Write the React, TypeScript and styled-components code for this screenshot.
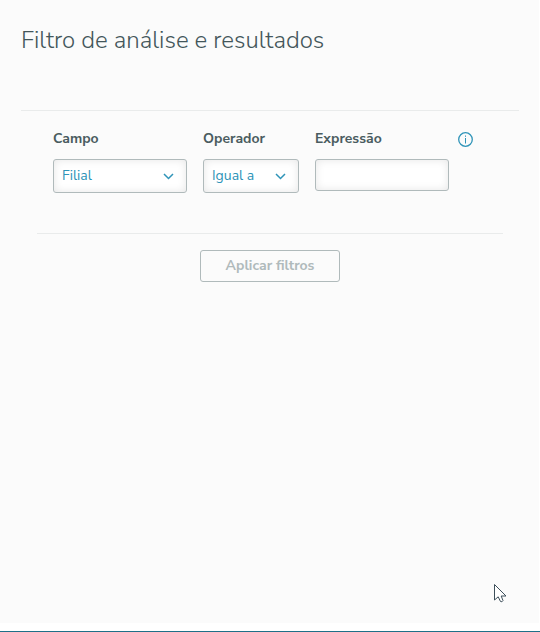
import React from 'react';
import styled, { createGlobalStyle } from 'styled-components';

const GlobalStyle = createGlobalStyle`
  *, *::before, *::after { box-sizing: border-box; }
  body {
    margin: 0;
    background: #ffffff;
    color: #4a5c60;
    font-family: "Nunito Sans", Nunito, "Open Sans", "Noto Sans", sans-serif;
    font-size: 14px;
    line-height: 20px;
  }
  button, input, select { font: inherit; margin: 0; }
`;

const Page = styled.div`
  display: flex;
  flex-direction: column;
  min-height: 100vh;
  padding: 0 1px 8px 0;
  border-bottom: 1px solid #1f6f88;
`;

const Panel = styled.main`
  flex: 1;
  padding: 24px 20px 24px 21px;
  background: #fbfbfb;
`;

const Title = styled.h1`
  margin: 0;
  padding-bottom: 54px;
  color: #43565a;
  font-size: 24px;
  font-weight: 300;
  line-height: 32px;
`;

const Form = styled.form`
  padding: 0 16px;
`;

const Divider = styled.hr`
  height: 1px;
  margin: 0;
  border: 0;
  background: #e9ebeb;
`;

const FilterRow = styled.div`
  display: flex;
  align-items: flex-start;
  gap: 8px;
  padding: 18px 28px 40px 16px;
`;

const Fields = styled.div`
  flex: 1;
  display: grid;
  grid-template-columns: 134fr 96fr 134fr;
  align-items: start;
  gap: 16px;
`;

const Field = styled.div`
  display: flex;
  flex-direction: column;
  gap: 10px;
  min-width: 0;
`;

const Label = styled.label`
  font-weight: 700;
  font-size: 14px;
  line-height: 20px;
`;

const SelectBox = styled.div`
  position: relative;
`;

const Select = styled.select`
  appearance: none;
  display: block;
  width: 100%;
  height: 34px;
  padding: 0 32px 0 8px;
  border: 1px solid #b0babb;
  border-radius: 3px;
  background: #ffffff;
  box-shadow: inset 0 0 8px rgba(0, 0, 0, 0.1);
  color: #2f94b8;
`;

const Chevron = styled.svg`
  position: absolute;
  top: 11px;
  right: 12px;
  pointer-events: none;
`;

const TextInput = styled.input`
  display: block;
  width: 100%;
  height: 32px;
  padding: 0 8px;
  border: 1px solid #b0babb;
  border-radius: 3px;
  background: #ffffff;
  box-shadow: inset 0 0 8px rgba(0, 0, 0, 0.1);
  color: #2f94b8;
`;

const InfoButton = styled.button`
  display: flex;
  align-items: center;
  justify-content: center;
  width: 18px;
  height: 20px;
  padding: 0;
  border: 0;
  background: none;
  color: #2f94b8;
`;

const Actions = styled.div`
  display: flex;
  justify-content: center;
  padding-top: 16px;
`;

const ApplyButton = styled.button`
  width: 140px;
  height: 32px;
  padding: 0;
  border: 1px solid #b0babb;
  border-radius: 3px;
  background: transparent;
  color: #b0babb;
  font-weight: 700;
`;

const Pointer = styled.svg`
  position: fixed;
  right: 33px;
  bottom: 28px;
  pointer-events: none;
`;

type SelectFieldProps = { id: string; label: string; options: string[] };

function SelectField({ id, label, options }: SelectFieldProps) {
  return (
    <Field>
      <Label htmlFor={id}>{label}</Label>
      <SelectBox>
        <Select id={id} defaultValue={options[0]}>
          {options.map((option) => (
            <option key={option}>{option}</option>
          ))}
        </Select>
        <Chevron width="12" height="12" viewBox="0 0 12 12" fill="none" aria-hidden="true">
          <path d="M1 4 5.500 8.500 10 4" stroke="#2f94b8" strokeWidth="1.500" />
        </Chevron>
      </SelectBox>
    </Field>
  );
}

export default function App() {
  return (
    <>
      <GlobalStyle />
      <Page>
        <Panel>
          <Title>Filtro de análise e resultados</Title>
          <Divider />
          <Form onSubmit={(event) => event.preventDefault()}>
            <FilterRow>
              <Fields>
                <SelectField id="campo" label="Campo" options={['Filial']} />
                <SelectField id="operador" label="Operador" options={['Igual a']} />
                <Field>
                  <Label htmlFor="expressao">Expressão</Label>
                  <TextInput id="expressao" type="text" />
                </Field>
              </Fields>
              <InfoButton type="button" aria-label="Informações">
                <svg width="16" height="16" viewBox="0 0 16 16" fill="none" aria-hidden="true">
                  <circle cx="7.500" cy="8.500" r="6.800" stroke="currentColor" strokeWidth="1.300" />
                  <path d="M7.500 7V12.500M7.500 4.500V5.800" stroke="currentColor" />
                </svg>
              </InfoButton>
            </FilterRow>
            <Divider />
            <Actions>
              <ApplyButton type="submit" disabled>Aplicar filtros</ApplyButton>
            </Actions>
          </Form>
        </Panel>
      </Page>
      <Pointer width="13" height="20" viewBox="0 0 13 20" aria-hidden="true">
        <path
          d="M.5.500v15.500l3.700-3.200 2.300 4.700q1.600 1 2.500-.900L7.200 12H12z"
          fill="#ffffff"
          stroke="#3d4f5a"
        />
      </Pointer>
    </>
  );
}
